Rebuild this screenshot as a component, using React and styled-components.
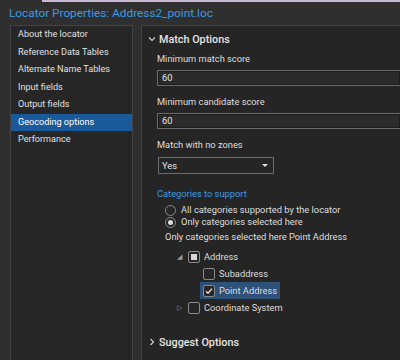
import React from "react";
import styled, { createGlobalStyle } from "styled-components";

const Global = createGlobalStyle`
  html, body { margin: 0; padding: 0; background: #2f2f2f; }
  body { font-family: Roboto, "Open Sans", sans-serif; }
`;

const Window = styled.div`
  width: 400px;
  height: 360px;
  background: #2f2f2f;
  overflow: hidden;
  display: flex;
  flex-direction: column;
`;

const TopEdge = styled.div`
  height: 2px;
  margin-left: 42px;
  background: #c8b9d6;
`;

const Title = styled.div`
  color: #3d9be0;
  font-size: 11.8px;
  height: 23px;
  line-height: 23px;
  padding-left: 9px;
  white-space: nowrap;
`;

const Body = styled.div`
  flex: 1;
  display: flex;
  gap: 8px;
  padding-left: 10px;
  min-height: 0;
`;

const NavList = styled.div`
  width: 121px;
  border: 1px solid #434343;
  border-bottom: none;
  background: #262626;
  display: flex;
  flex-direction: column;
`;

const NavItem = styled.div`
  height: 17.5px;
  line-height: 17.5px;
  padding-left: 7px;
  font-size: 9.1px;
  color: ${p => (p.$active ? "#ffffff" : "#e0e0e0")};
  background: ${p => (p.$active ? "#1a5a9a" : "transparent")};
  white-space: nowrap;
`;

const Content = styled.div`
  flex: 1;
  border: 1px solid #434343;
  border-right: none;
  border-bottom: none;
  background: #252525;
  padding: 4px 0 0 6px;
  display: flex;
  flex-direction: column;
`;

const SectionHead = styled.div`
  display: flex;
  align-items: center;
  gap: 3px;
  height: 18px;
  font-size: 10.8px;
  font-weight: 500;
  color: #e6e6e6;
  margin-top: ${p => p.$mt || 0}px;
`;

const Chevron = styled.svg`
  width: 8px;
  height: 8px;
  flex: none;
`;

const Section = styled.div`
  padding-left: 9px;
  display: flex;
  flex-direction: column;
`;

const Label = styled.div`
  font-size: 9.3px;
  color: ${p => (p.$blue ? "#3d9be0" : "#dedede")};
  height: 16px;
  line-height: 16px;
  margin-top: ${p => p.$mt || 0}px;
  padding-left: ${p => p.$indent || 0}px;
  white-space: nowrap;
`;

const TextBox = styled.div`
  height: 14px;
  margin-top: 3px;
  border: 1px solid #6b6b6b;
  border-right: none;
  background: #2b2b2b;
  font-size: 9.3px;
  line-height: 14px;
  padding-left: 4px;
  color: #e4e4e4;
  box-shadow: inset 0 0 0 1px #1c1c1c;
`;

const Select = styled.div`
  box-sizing: border-box;
  width: 116px;
  height: 17px;
  margin-top: 4px;
  margin-left: 1px;
  border: 1px solid #6b6b6b;
  background: #252525;
  font-size: 9.3px;
  padding: 0 5px 0 3px;
  display: flex;
  align-items: center;
  justify-content: space-between;
  color: #e4e4e4;
`;

const Caret = styled.span`
  width: 0;
  height: 0;
  border-left: 3px solid transparent;
  border-right: 3px solid transparent;
  border-top: 3px solid #e0e0e0;
`;

const RadioRow = styled.div`
  display: flex;
  align-items: center;
  gap: 5px;
  height: 12px;
  line-height: 12px;
  padding-left: 8px;
  font-size: 9.3px;
  color: #dedede;
  white-space: nowrap;
  margin-top: ${p => p.$mt || 0}px;
`;

const Radio = styled.span`
  width: 9px;
  height: 9px;
  border-radius: 50%;
  border: 1px solid #8a8a8a;
  background: #262626;
  display: flex;
  align-items: center;
  justify-content: center;
  &::after {
    content: "";
    width: 5px;
    height: 5px;
    border-radius: 50%;
    background: ${p => (p.$on ? "#dcdcdc" : "transparent")};
  }
`;

const Tree = styled.div`
  display: flex;
  flex-direction: column;
  padding-left: 17px;
  margin-top: 3px;
`;

const TreeRow = styled.div`
  display: flex;
  align-items: center;
  height: 17px;
  padding-left: ${p => p.$level * 26}px;
`;

const Twisty = styled.span`
  width: 10px;
  font-size: 7px;
  color: #9a9a9a;
  flex: none;
  text-align: center;
  margin-right: 1px;
`;

const Node = styled.div`
  display: flex;
  align-items: center;
  gap: 4px;
  height: 17px;
  padding: 0 3px;
  background: ${p => (p.$sel ? "#2d5179" : "transparent")};
  font-size: 9.3px;
  color: #dedede;
  white-space: nowrap;
`;

const Check = styled.span`
  width: 10px;
  height: 10px;
  border: 1px solid #8a8a8a;
  border-radius: 2px;
  background: #262626;
  display: flex;
  align-items: center;
  justify-content: center;
  flex: none;
  &::after {
    content: "";
    display: ${p => (p.$partial ? "block" : "none")};
    width: 6px;
    height: 6px;
    background: #d8d8d8;
  }
`;

const ChevronDown = () => (
  <Chevron viewBox="0 0 8 8">
    <path d="M1 2.5 L4 5.5 L7 2.5" stroke="#cfcfcf" strokeWidth="1.2" fill="none" />
  </Chevron>
);

const ChevronRight = () => (
  <Chevron viewBox="0 0 8 8">
    <path d="M2.5 1 L5.5 4 L2.5 7" stroke="#cfcfcf" strokeWidth="1.2" fill="none" />
  </Chevron>
);

const Tick = () => (
  <svg width="8" height="8" viewBox="0 0 8 8">
    <path d="M1 4.2 L3 6.2 L7 1.6" stroke="#e6e6e6" strokeWidth="1.3" fill="none" />
  </svg>
);

const navItems = [
  "About the locator",
  "Reference Data Tables",
  "Alternate Name Tables",
  "Input fields",
  "Output fields",
  "Geocoding options",
  "Performance",
];

export default function App() {
  return (
    <Window>
      <Global />
      <TopEdge />
      <Title>Locator Properties: Address2_point.loc</Title>
      <Body>
        <NavList>
          {navItems.map(n => (
            <NavItem key={n} $active={n === "Geocoding options"}>{n}</NavItem>
          ))}
        </NavList>
        <Content>
          <SectionHead><ChevronDown />Match Options</SectionHead>
          <Section>
            <Label $mt={3}>Minimum match score</Label>
            <TextBox>60</TextBox>
            <Label $mt={8}>Minimum candidate score</Label>
            <TextBox>60</TextBox>
            <Label $mt={8}>Match with no zones</Label>
            <Select>Yes<Caret /></Select>
            <Label $blue $mt={12}>Categories to support</Label>
            <RadioRow $mt={2}><Radio />All categories supported by the locator</RadioRow>
            <RadioRow><Radio $on />Only categories selected here</RadioRow>
            <Label $indent={8} $mt={1}>Only categories selected here Point Address</Label>
            <Tree>
              <TreeRow $level={0}>
                <Twisty>◢</Twisty>
                <Node><Check $partial />Address</Node>
              </TreeRow>
              <TreeRow $level={1}>
                <Node><Check />Subaddress</Node>
              </TreeRow>
              <TreeRow $level={1}>
                <Node $sel><Check><Tick /></Check>Point Address</Node>
              </TreeRow>
              <TreeRow $level={0}>
                <Twisty>▷</Twisty>
                <Node><Check />Coordinate System</Node>
              </TreeRow>
            </Tree>
          </Section>
          <SectionHead $mt={17}><ChevronRight />Suggest Options</SectionHead>
        </Content>
      </Body>
    </Window>
  );
}
